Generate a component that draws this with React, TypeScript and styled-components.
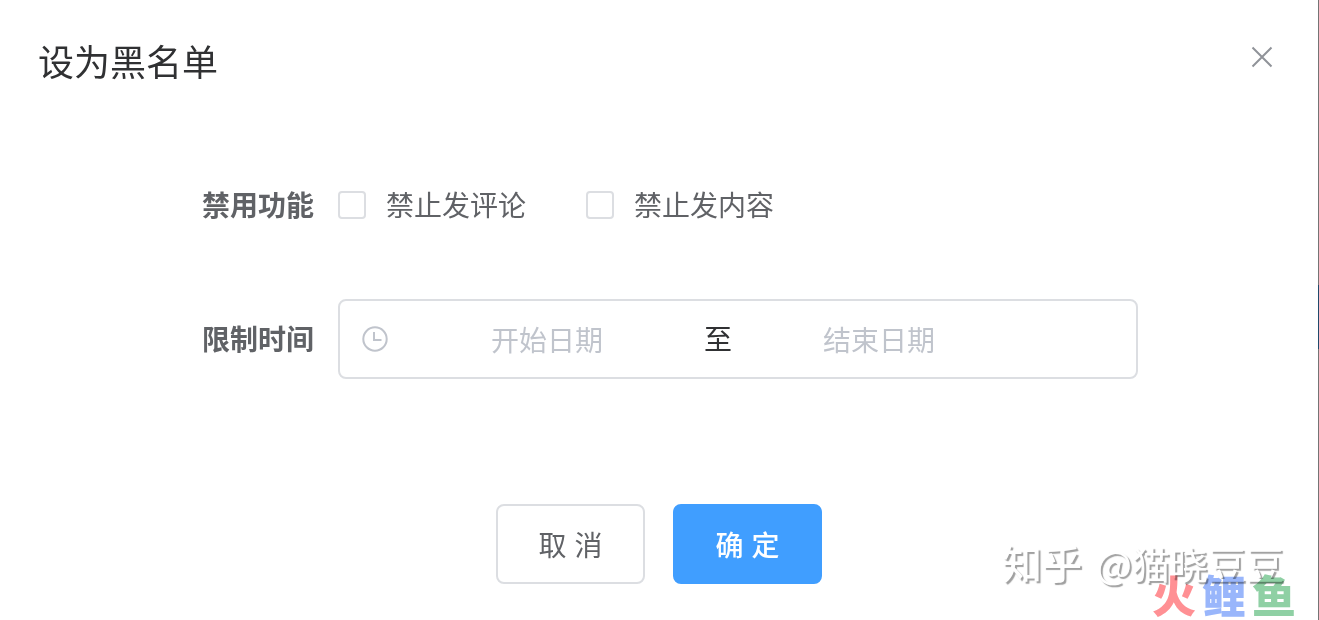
import React from "react";
import styled, { createGlobalStyle } from "styled-components";

const Global = createGlobalStyle`
  * { box-sizing: border-box; }
  body {
    margin: 0;
    background: #fff;
    color: #606266;
    font-family: "Noto Sans CJK SC", sans-serif;
    font-size: 28px;
    line-height: 40px;
  }
  button, input { font: inherit; }
`;

const Page = styled.div`
  position: relative;
  display: flex;
  min-height: 100vh;
`;

const Dialog = styled.main`
  flex: 1;
  min-width: 0;
`;

const PageEdge = styled.div`
  width: 1px;
  background: linear-gradient(#747474 0 285px, #1f4a6b 285px 349px, #747474 349px);
`;

const Header = styled.header`
  display: flex;
  justify-content: space-between;
  align-items: flex-start;
  padding: 36px 35px 0 38px;
`;

const Title = styled.h1`
  margin: 0;
  font-size: 36px;
  font-weight: 400;
  line-height: 48px;
  color: #303133;
`;

const CloseButton = styled.button`
  display: flex;
  padding: 6px;
  border: 0;
  background: none;
  color: #909399;
  cursor: pointer;
`;

const Form = styled.form`
  padding-top: 81px;
`;

const Field = styled.div`
  display: flex;
  align-items: center;
  min-height: 80px;
  margin-bottom: 54px;
`;

const FieldLabel = styled.span`
  flex: none;
  width: 338px;
  padding: 0 24px 2px 0;
  text-align: right;
  font-weight: 700;
`;

const Options = styled.div`
  display: flex;
  gap: 60px;
`;

const Option = styled.label`
  display: flex;
  align-items: center;
  gap: 20px;
  cursor: pointer;
`;

const OptionText = styled.span`
  padding-bottom: 2px;
`;

const Checkbox = styled.input`
  appearance: none;
  width: 28px;
  height: 28px;
  margin: 0;
  border: 2px solid #dcdee2;
  border-radius: 4px;
  background: #fff;
  &:checked { background: #409eff; border-color: #409eff; }
`;

const DateRange = styled.div`
  display: flex;
  align-items: center;
  width: 800px;
  height: 80px;
  padding: 0 20px;
  border: 2px solid #dcdee2;
  border-radius: 8px;
`;

const IconSlot = styled.span`
  display: flex;
  flex: none;
  width: 40px;
  color: #c0c4cc;
`;

const DateInput = styled.input`
  width: 294px;
  height: 76px;
  padding: 0;
  border: 0;
  outline: 0;
  background: none;
  text-align: center;
  color: #606266;
  &::placeholder { color: #c0c4cc; opacity: 1; }
`;

const Separator = styled.span`
  flex: none;
  width: 38px;
  padding: 0 0 2px 10px;
  color: #303133;
`;

const Footer = styled.footer`
  display: flex;
  justify-content: center;
  gap: 28px;
  padding: 71px 0 36px;
`;

const ActionButton = styled.button<{ $primary?: boolean }>`
  min-width: 149px;
  height: 80px;
  padding: 6px 40px 0;
  border: 2px solid ${(p) => (p.$primary ? "#409eff" : "#dcdee2")};
  border-radius: 8px;
  background: ${(p) => (p.$primary ? "#409eff" : "#fff")};
  color: ${(p) => (p.$primary ? "#fff" : "#606266")};
  font-family: "Liberation Sans", "Noto Sans CJK SC", sans-serif;
  font-weight: ${(p) => (p.$primary ? 500 : 400)};
  cursor: pointer;
`;

const Watermark = styled.div`
  position: absolute;
  right: 35px;
  bottom: 29px;
  display: flex;
  align-items: baseline;
  gap: 14px;
  font-size: 38px;
  line-height: 56px;
  color: #fff;
  text-shadow: 2px 2px 1px #a0a0a0;
  white-space: nowrap;
  pointer-events: none;
`;

const WatermarkSite = styled.span`
  font-size: 40px;
  font-weight: 500;
`;

const Brand = styled.div`
  position: absolute;
  right: 23px;
  bottom: 2px;
  display: flex;
  gap: 6px;
  font-size: 44px;
  font-weight: 900;
  line-height: 48px;
  mix-blend-mode: multiply;
  pointer-events: none;
`;

const BrandMark = styled.span<{ $color: string }>`
  color: ${(p) => p.$color};
`;

export default function App() {
  return (
    <Page>
      <Global />
      <Dialog>
        <Header>
          <Title>设为黑名单</Title>
          <CloseButton type="button" aria-label="关闭">
            <svg width="30" height="30" viewBox="0 0 30 30" fill="none" stroke="currentColor" strokeWidth="2">
              <path d="M5.5 5.5 24.5 24.5M24.5 5.5 5.5 24.5" />
            </svg>
          </CloseButton>
        </Header>
        <Form id="blacklist">
          <Field role="group" aria-labelledby="feature-label">
            <FieldLabel id="feature-label">禁用功能</FieldLabel>
            <Options>
              <Option><Checkbox type="checkbox" /><OptionText>禁止发评论</OptionText></Option>
              <Option><Checkbox type="checkbox" /><OptionText>禁止发内容</OptionText></Option>
            </Options>
          </Field>
          <Field role="group" aria-labelledby="time-label">
            <FieldLabel id="time-label">限制时间</FieldLabel>
            <DateRange>
              <IconSlot>
                <svg width="30" height="30" viewBox="0 0 30 30" fill="none" stroke="currentColor" strokeWidth="2">
                  <circle cx="15" cy="15" r="11.7" />
                  <path d="M14 8V16H21.5" />
                </svg>
              </IconSlot>
              <DateInput type="text" placeholder="开始日期" aria-label="开始日期" />
              <Separator>至</Separator>
              <DateInput type="text" placeholder="结束日期" aria-label="结束日期" />
            </DateRange>
          </Field>
        </Form>
        <Footer>
          <ActionButton type="button">取 消</ActionButton>
          <ActionButton type="submit" form="blacklist" $primary>确 定</ActionButton>
        </Footer>
      </Dialog>
      <PageEdge />
      <Watermark>
        <WatermarkSite>知乎</WatermarkSite>
        <span>@猫晓豆豆</span>
      </Watermark>
      <Brand>
        <BrandMark $color="#ff9094">火</BrandMark>
        <BrandMark $color="#99b6fb">鲤</BrandMark>
        <BrandMark $color="#8fd0a4">鱼</BrandMark>
      </Brand>
    </Page>
  );
}
